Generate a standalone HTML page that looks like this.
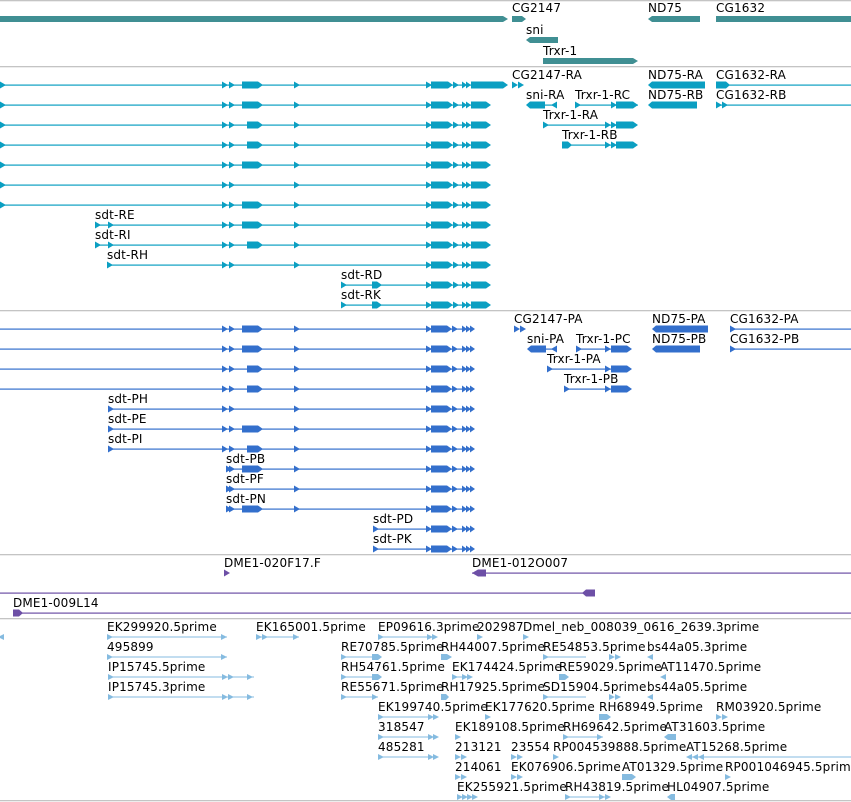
<!DOCTYPE html>
<html><head><meta charset="utf-8"><style>
html,body{margin:0;padding:0;background:#fff;width:851px;height:802px;overflow:hidden}
svg{display:block}
text{font-family:"DejaVu Sans","Liberation Sans",sans-serif;font-size:12px;fill:#000;letter-spacing:0.15px}
</style></head><body>
<svg width="851" height="802" viewBox="0 0 851 802" xmlns="http://www.w3.org/2000/svg">
<defs>
<g id="cyan" fill="#0b9fc2" stroke="none">
<rect x="0" y="-0.5" width="488" height="1.2"/>
<path d="M222,-3.5L228,0L222,3.5Z M229,-3.5L235,0L229,3.5Z"/>
<path d="M294,-3.5L300,0L294,3.5Z"/>
<path d="M426,-3.5L432,0L426,3.5Z M431,-3.5H448L453,0L448,3.5H431Z M453,-3.5L459,0L453,3.5Z M462,-3.5L467,0L462,3.5Z M466,-3.5L471,0L466,3.5Z M471,-3.5H486L491,0L486,3.5H471Z"/>
</g>
<g id="blue" fill="#336fcc" stroke="none">
<rect x="0" y="-0.5" width="472" height="1.2"/>
<path d="M222,-3.5L228,0L222,3.5Z M229,-3.5L235,0L229,3.5Z"/>
<path d="M294,-3.5L300,0L294,3.5Z"/>
<path d="M426,-3.5L432,0L426,3.5Z M431,-3.5H447L452,0L447,3.5H431Z M452,-3.5L458,0L452,3.5Z M462,-3.5L467,0L462,3.5Z M466,-3.5L471,0L466,3.5Z M470,-3.5L475,0L470,3.5Z"/>
</g>
<path id="bL" d="M242,-3.5H258L263,0L258,3.5H242Z"/>
<path id="bS" d="M247,-3.5H258L263,0L258,3.5H247Z"/>
<path id="tr" d="M0,-3.5L6,0L0,3.5Z"/>
<path id="tl" d="M6,-3.5L0,0L6,3.5Z"/>
<path id="etr" d="M0,-3L6,0L0,3Z"/>
<path id="etl" d="M6,-3L0,0L6,3Z"/>
</defs>

<g fill="#c4c4c4">
<rect x="0" y="0" width="851" height="1.3"/>
<rect x="0" y="66" width="851" height="1.3"/>
<rect x="0" y="310" width="851" height="1.3"/>
<rect x="0" y="554" width="851" height="1.3"/>
<rect x="0" y="618" width="851" height="1.3"/>
<rect x="0" y="800" width="851" height="1.3"/>
</g>

<g fill="#408f93">
<path d="M0,16H503L508,19L503,22H0Z"/>
<path d="M512,16H522L526,19L522,22H512Z"/>
<path d="M652,16H700V22H652L648,19Z"/>
<rect x="716" y="16" width="135" height="6"/>
<path d="M530,37H558V43H530L526,40Z"/>
<path d="M543,58H633L638,61L633,64H543Z"/>
</g>
<text x="512" y="12">CG2147</text>
<text x="648" y="12">ND75</text>
<text x="716" y="12">CG1632</text>
<text x="526" y="34">sni</text>
<text x="543" y="55">Trxr-1</text>

<use href="#cyan" y="85"/>
<use href="#cyan" y="105"/>
<use href="#cyan" y="125"/>
<use href="#cyan" y="145"/>
<use href="#cyan" y="165"/>
<use href="#cyan" y="185"/>
<use href="#cyan" y="205"/>
<use href="#cyan" y="225"/>
<rect x="0" y="220" width="95" height="10" fill="#fff"/>
<use href="#cyan" y="245"/>
<rect x="0" y="240" width="95" height="10" fill="#fff"/>
<use href="#cyan" y="265"/>
<rect x="0" y="260" width="107" height="10" fill="#fff"/>
<use href="#cyan" y="285"/>
<rect x="0" y="280" width="341" height="10" fill="#fff"/>
<use href="#cyan" y="305"/>
<rect x="0" y="300" width="341" height="10" fill="#fff"/>
<g fill="#0b9fc2">
<use href="#bL" y="85"/><use href="#bL" y="105"/><use href="#bS" y="125"/><use href="#bS" y="145"/><use href="#bL" y="165"/><use href="#bL" y="205"/><use href="#bL" y="225"/><use href="#bS" y="245"/>
<path d="M471,81.5H503L508,85L503,88.5H471Z"/>
<use href="#tr" x="0" y="85"/><use href="#tr" x="0" y="105"/><use href="#tr" x="0" y="125"/><use href="#tr" x="0" y="145"/><use href="#tr" x="0" y="165"/><use href="#tr" x="0" y="185"/><use href="#tr" x="0" y="205"/>
<use href="#tr" x="95" y="225"/><use href="#tr" x="108" y="225"/>
<use href="#tr" x="95" y="245"/><use href="#tr" x="108" y="245"/>
<use href="#tr" x="107" y="265"/>
<use href="#tr" x="341" y="285"/><path d="M372,281.5H377L382,285L377,288.5H372Z"/>
<use href="#tr" x="341" y="305"/><path d="M372,301.5H377L382,305L377,308.5H372Z"/>
<use href="#tr" x="512" y="85"/><use href="#tr" x="518" y="85"/>
<path d="M652,81.5H705V88.5H652L648,85Z"/><rect x="716" y="84.5" width="135" height="1.2"/><path d="M716,81.5H726L730,85L726,88.5H716Z"/>
<path d="M530,101.5H545V108.5H530L526,105Z"/><rect x="530" y="104.5" width="27" height="1.2"/><use href="#tl" x="551" y="105"/>
<rect x="575" y="104.5" width="63" height="1.2"/><use href="#tr" x="575" y="105"/><use href="#tr" x="611" y="105"/><path d="M616,101.5H633L638,105L633,108.5H616Z"/>
<path d="M652,101.5H697V108.5H652L648,105Z"/>
<rect x="716" y="104.5" width="135" height="1.2"/><use href="#tr" x="716" y="105"/><use href="#tr" x="722" y="105"/>
<rect x="543" y="124.5" width="90" height="1.2"/><use href="#tr" x="543" y="125"/><use href="#tr" x="605" y="125"/><use href="#tr" x="611" y="125"/><path d="M616,121.5H633L638,125L633,128.5H616Z"/>
<rect x="562" y="144.5" width="70" height="1.2"/><path d="M562,141.5H568L572,145L568,148.5H562Z"/><use href="#tr" x="605" y="145"/><use href="#tr" x="611" y="145"/><path d="M616,141.5H633L638,145L633,148.5H616Z"/>
</g>
<text x="95" y="219">sdt-RE</text>
<text x="95" y="239">sdt-RI</text>
<text x="107" y="259">sdt-RH</text>
<text x="341" y="279">sdt-RD</text>
<text x="341" y="299">sdt-RK</text>
<text x="512" y="79">CG2147-RA</text>
<text x="648" y="79">ND75-RA</text>
<text x="716" y="79">CG1632-RA</text>
<text x="526" y="99">sni-RA</text>
<text x="575" y="99">Trxr-1-RC</text>
<text x="648" y="99">ND75-RB</text>
<text x="716" y="99">CG1632-RB</text>
<text x="543" y="119">Trxr-1-RA</text>
<text x="562" y="139">Trxr-1-RB</text>

<use href="#blue" y="329"/>
<use href="#blue" y="349"/>
<use href="#blue" y="369"/>
<use href="#blue" y="389"/>
<use href="#blue" y="409"/>
<rect x="0" y="404" width="108" height="10" fill="#fff"/>
<use href="#blue" y="429"/>
<rect x="0" y="424" width="108" height="10" fill="#fff"/>
<use href="#blue" y="449"/>
<rect x="0" y="444" width="108" height="10" fill="#fff"/>
<use href="#blue" y="469"/>
<rect x="0" y="464" width="226" height="10" fill="#fff"/>
<use href="#blue" y="489"/>
<rect x="0" y="484" width="226" height="10" fill="#fff"/>
<use href="#blue" y="509"/>
<rect x="0" y="504" width="226" height="10" fill="#fff"/>
<use href="#blue" y="529"/>
<rect x="0" y="524" width="373" height="10" fill="#fff"/>
<use href="#blue" y="549"/>
<rect x="0" y="544" width="373" height="10" fill="#fff"/>
<g fill="#336fcc">
<use href="#bL" y="329"/><use href="#bL" y="349"/><use href="#bS" y="369"/><use href="#bS" y="389"/>
<use href="#bL" y="429"/><use href="#bS" y="449"/><use href="#bL" y="469"/><use href="#bL" y="509"/>
<use href="#tr" x="108" y="409"/><use href="#tr" x="108" y="429"/><use href="#tr" x="108" y="449"/>
<use href="#tr" x="226" y="469"/><use href="#tr" x="226" y="489"/><use href="#tr" x="226" y="509"/>
<use href="#tr" x="373" y="529"/><use href="#tr" x="373" y="549"/>
<use href="#tr" x="514" y="329"/><use href="#tr" x="520" y="329"/>
<path d="M656,325.5H708V332.5H656L652,329Z"/><rect x="730" y="328.5" width="121" height="1.2"/><use href="#tr" x="730" y="329"/>
<path d="M531,345.5H546V352.5H531L527,349Z"/><rect x="531" y="348.5" width="26" height="1.2"/><use href="#tl" x="551" y="349"/>
<rect x="576" y="348.5" width="55" height="1.2"/><use href="#tr" x="576" y="349"/><use href="#tr" x="605" y="349"/><path d="M611,345.5H627L632,349L627,352.5H611Z"/>
<path d="M656,345.5H700V352.5H656L652,349Z"/>
<rect x="730" y="348.5" width="121" height="1.2"/><use href="#tr" x="730" y="349"/>
<rect x="547" y="368.5" width="84" height="1.2"/><use href="#tr" x="547" y="369"/><use href="#tr" x="605" y="369"/><path d="M611,365.5H627L632,369L627,372.5H611Z"/>
<rect x="564" y="388.5" width="67" height="1.2"/><use href="#tr" x="564" y="389"/><use href="#tr" x="605" y="389"/><path d="M611,385.5H627L632,389L627,392.5H611Z"/>
</g>
<text x="514" y="323">CG2147-PA</text>
<text x="652" y="323">ND75-PA</text>
<text x="730" y="323">CG1632-PA</text>
<text x="527" y="343">sni-PA</text>
<text x="576" y="343">Trxr-1-PC</text>
<text x="652" y="343">ND75-PB</text>
<text x="730" y="343">CG1632-PB</text>
<text x="547" y="363">Trxr-1-PA</text>
<text x="564" y="383">Trxr-1-PB</text>
<text x="108" y="403">sdt-PH</text>
<text x="108" y="423">sdt-PE</text>
<text x="108" y="443">sdt-PI</text>
<text x="226" y="463">sdt-PB</text>
<text x="226" y="483">sdt-PF</text>
<text x="226" y="503">sdt-PN</text>
<text x="373" y="523">sdt-PD</text>
<text x="373" y="543">sdt-PK</text>

<g fill="#6d4fa6">
<use href="#tr" x="224" y="573"/>
<rect x="472" y="572.5" width="379" height="1.2"/><path d="M478,569.5H486V576.5H478L472,573Z"/>
<rect x="0" y="592.5" width="595" height="1.2"/><path d="M586,589.5H595V596.5H586L582,593Z"/>
<rect x="13" y="612.5" width="838" height="1.2"/><path d="M13,609.5H19L23,613L19,616.5H13Z"/>
</g>
<text x="224" y="567">DME1-020F17.F</text>
<text x="472" y="567">DME1-012O007</text>
<text x="13" y="607">DME1-009L14</text>

<g fill="#85bbe0">
<use href="#etl" x="-2" y="637"/>
<rect x="107" y="636.5" width="120" height="1"/><use href="#etr" x="107" y="637"/><use href="#etr" x="221" y="637"/>
<rect x="256" y="636.5" width="43" height="1"/><use href="#etr" x="256" y="637"/><use href="#etr" x="262" y="637"/><use href="#etr" x="293" y="637"/>
<rect x="378" y="636.5" width="59" height="1"/><use href="#etr" x="378" y="637"/><use href="#etr" x="427" y="637"/><use href="#etr" x="432" y="637"/>
<use href="#etr" x="477" y="637"/><use href="#etr" x="523" y="637"/>
<rect x="107" y="656.5" width="120" height="1"/><use href="#etr" x="107" y="657"/><use href="#etr" x="221" y="657"/>
<rect x="341" y="656.5" width="37" height="1"/><use href="#etr" x="341" y="657"/><path d="M372,654H378L382,657L378,660H372Z"/>
<path d="M441,654H447L452,657L447,660H441Z"/>
<rect x="543" y="656.5" width="43" height="1"/><use href="#etr" x="543" y="657"/><use href="#etr" x="609" y="657"/><use href="#etr" x="615" y="657"/>
<use href="#etl" x="647" y="657"/>
<rect x="108" y="676.5" width="146" height="1"/><use href="#etr" x="108" y="677"/><use href="#etr" x="222" y="677"/><use href="#etr" x="228" y="677"/><use href="#etr" x="247" y="677"/>
<rect x="341" y="676.5" width="37" height="1"/><use href="#etr" x="341" y="677"/><path d="M372,674H378L382,677L378,680H372Z"/>
<rect x="452" y="676.5" width="20" height="1"/><use href="#etr" x="452" y="677"/><use href="#etr" x="462" y="677"/><use href="#etr" x="467" y="677"/>
<path d="M559,674H565L569,677L565,680H559Z"/><use href="#etl" x="660" y="677"/>
<rect x="108" y="696.5" width="146" height="1"/><use href="#etr" x="108" y="697"/><use href="#etr" x="222" y="697"/><use href="#etr" x="228" y="697"/><use href="#etr" x="247" y="697"/>
<rect x="341" y="696.5" width="37" height="1"/><use href="#etr" x="341" y="697"/><use href="#etr" x="372" y="697"/>
<path d="M441,694H446L449,697L446,700H441Z"/>
<rect x="543" y="696.5" width="43" height="1"/><use href="#etr" x="543" y="697"/><use href="#etr" x="609" y="697"/><use href="#etr" x="615" y="697"/>
<use href="#etl" x="647" y="697"/>
<rect x="378" y="716.5" width="57" height="1"/><use href="#etr" x="378" y="717"/><use href="#etr" x="428" y="717"/><use href="#etr" x="433" y="717"/>
<use href="#etr" x="485" y="717"/><path d="M599,714H607L611,717L607,720H599Z"/><use href="#etr" x="716" y="717"/><use href="#etr" x="722" y="717"/>
<rect x="378" y="736.5" width="57" height="1"/><use href="#etr" x="378" y="737"/><use href="#etr" x="428" y="737"/><use href="#etr" x="433" y="737"/>
<use href="#etr" x="455" y="737"/><rect x="563" y="736.5" width="40" height="1"/><use href="#etr" x="563" y="737"/><use href="#etr" x="597" y="737"/>
<path d="M668,734H676V740H668L664,737Z"/>
<rect x="378" y="756.5" width="57" height="1"/><use href="#etr" x="378" y="757"/><use href="#etr" x="428" y="757"/><use href="#etr" x="433" y="757"/>
<use href="#etr" x="455" y="757"/><use href="#etr" x="461" y="757"/><use href="#etr" x="511" y="757"/><use href="#etr" x="517" y="757"/><use href="#etr" x="553" y="757"/>
<rect x="688" y="756.5" width="163" height="1"/><use href="#etl" x="686" y="757"/><use href="#etl" x="692" y="757"/><use href="#etl" x="698" y="757"/>
<use href="#etr" x="455" y="777"/><use href="#etr" x="461" y="777"/><use href="#etr" x="511" y="777"/><use href="#etr" x="517" y="777"/>
<path d="M622,774H632L636,777L632,780H622Z"/><use href="#etr" x="725" y="777"/>
<use href="#etr" x="457" y="797"/><use href="#etr" x="462" y="797"/><use href="#etr" x="467" y="797"/><use href="#etr" x="472" y="797"/>
<rect x="565" y="796.5" width="40" height="1"/><use href="#etr" x="565" y="797"/><use href="#etr" x="599" y="797"/><use href="#etr" x="605" y="797"/>
<path d="M671,794H675V800H671L667,797Z"/>
</g>
<text x="107" y="631">EK299920.5prime</text>
<text x="256" y="631">EK165001.5prime</text>
<text x="378" y="631">EP09616.3prime</text>
<text x="477" y="631">202987</text>
<text x="523" y="631">Dmel_neb_008039_0616_2639.3prime</text>
<text x="107" y="651">495899</text>
<text x="341" y="651">RE70785.5prime</text>
<text x="441" y="651">RH44007.5prime</text>
<text x="543" y="651">RE54853.5prime</text>
<text x="647" y="651">bs44a05.3prime</text>
<text x="108" y="671">IP15745.5prime</text>
<text x="341" y="671">RH54761.5prime</text>
<text x="452" y="671">EK174424.5prime</text>
<text x="559" y="671">RE59029.5prime</text>
<text x="660" y="671">AT11470.5prime</text>
<text x="108" y="691">IP15745.3prime</text>
<text x="341" y="691">RE55671.5prime</text>
<text x="441" y="691">RH17925.5prime</text>
<text x="543" y="691">SD15904.5prime</text>
<text x="647" y="691">bs44a05.5prime</text>
<text x="378" y="711">EK199740.5prime</text>
<text x="485" y="711">EK177620.5prime</text>
<text x="599" y="711">RH68949.5prime</text>
<text x="716" y="711">RM03920.5prime</text>
<text x="378" y="731">318547</text>
<text x="455" y="731">EK189108.5prime</text>
<text x="563" y="731">RH69642.5prime</text>
<text x="664" y="731">AT31603.5prime</text>
<text x="378" y="751">485281</text>
<text x="455" y="751">213121</text>
<text x="511" y="751">23554</text>
<text x="553" y="751">RP004539888.5prime</text>
<text x="686" y="751">AT15268.5prime</text>
<text x="455" y="771">214061</text>
<text x="511" y="771">EK076906.5prime</text>
<text x="622" y="771">AT01329.5prime</text>
<text x="725" y="771">RP001046945.5prime</text>
<text x="457" y="791">EK255921.5prime</text>
<text x="565" y="791">RH43819.5prime</text>
<text x="667" y="791">HL04907.5prime</text>
</svg>
</body></html>
